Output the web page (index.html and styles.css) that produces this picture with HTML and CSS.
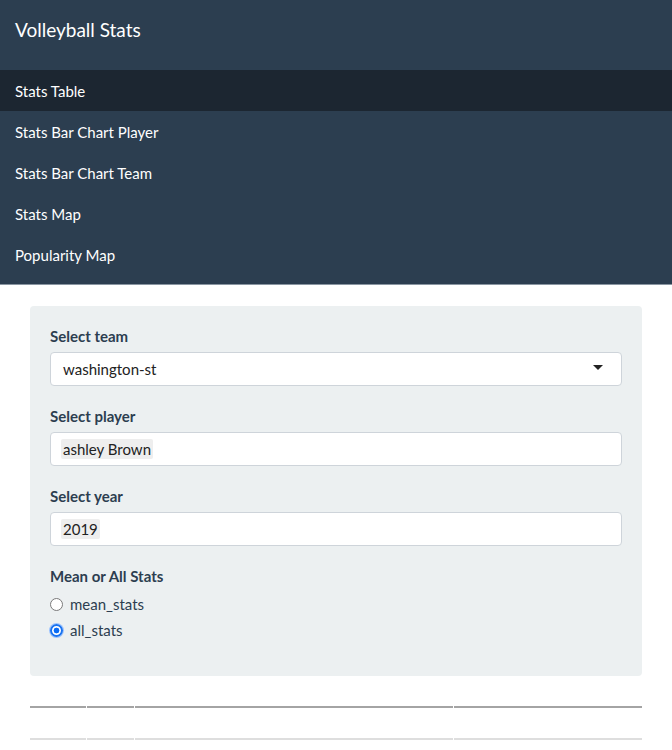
FILE: index.html
```html
<!DOCTYPE html>
<html>
<head>
<meta charset="utf-8">
<link rel="stylesheet" href="styles.css">
</head>
<body>
<nav class="navbar">
  <div class="brand">Volleyball Stats</div>
  <ul class="nav">
    <li class="active">Stats Table</li>
    <li>Stats Bar Chart Player</li>
    <li>Stats Bar Chart Team</li>
    <li>Stats Map</li>
    <li>Popularity Map</li>
  </ul>
</nav>
<main class="content">
  <div class="well">
    <div class="group">
      <label class="lbl">Select team</label>
      <div class="input select">
        <span>washington-st</span>
        <span class="caret"></span>
      </div>
    </div>
    <div class="group">
      <label class="lbl">Select player</label>
      <div class="input"><span class="chip">ashley Brown</span></div>
    </div>
    <div class="group">
      <label class="lbl">Select year</label>
      <div class="input"><span class="chip">2019</span></div>
    </div>
    <div class="group radios">
      <label class="lbl">Mean or All Stats</label>
      <label class="radio"><span class="dot"></span>mean_stats</label>
      <label class="radio"><span class="dot on"></span>all_stats</label>
    </div>
  </div>
  <div class="tblwrap">
    <table class="tbl">
      <thead>
        <tr><th class="c1"></th><th class="c2"></th><th class="c3"></th><th class="c4"></th></tr>
      </thead>
      <tbody>
        <tr><td>1</td><td>2019</td><td>ashley Brown</td><td>washington-st</td></tr>
      </tbody>
    </table>
  </div>
</main>
</body>
</html>
```
FILE: styles.css
```css
html, body {
  margin: 0;
  padding: 0;
  background: #fff;
  font-family: Lato, "Open Sans", sans-serif;
  color: #2c3e50;
}
.navbar {
  background: #2c3e50;
  padding-bottom: 9px;
  border-bottom: 1px solid #8a96a2;
}
.brand {
  height: 70px;
  box-sizing: border-box;
  padding: 18px 15px 0;
  font-size: 19px;
  line-height: 24px;
  color: #fff;
}
.nav {
  list-style: none;
  margin: 0;
  padding: 0;
}
.nav li {
  height: 40px;
  padding: 1px 15px 0;
  line-height: 41px;
  font-size: 15px;
  color: #fff;
}
.nav li.active {
  background: #1c2631;
}
.content {
  padding: 21px 30px 0;
}
.well {
  background: #ecf0f1;
  border-radius: 4px;
  padding: 20px 20px 33px;
}
.group {
  margin-bottom: 20px;
}
.group.radios { margin-bottom: 0; }
.lbl {
  display: block;
  font-weight: bold;
  font-size: 15px;
  line-height: 20px;
  margin-bottom: 6px;
}
.input {
  height: 34px;
  box-sizing: border-box;
  background: #fff;
  border: 1px solid #ced4da;
  border-radius: 4px;
  display: flex;
  align-items: center;
  padding: 0 12px;
  font-size: 15px;
  color: #222;
}
.input .chip {
  background: #eeeeee;
  border-radius: 2px;
  padding: 1px 2px;
  margin-left: -2px;
}
.select { justify-content: space-between; }
.caret {
  width: 0;
  height: 0;
  border-left: 5px solid transparent;
  border-right: 5px solid transparent;
  border-top: 5px solid #222;
  margin-right: 6px;
  margin-top: -3px;
}
.radios .lbl { margin-bottom: 5px; }
.radio {
  display: flex;
  align-items: center;
  font-size: 15px;
  height: 26px;
  color: #2c3e50;
}
.dot {
  width: 13px;
  height: 13px;
  border: 1px solid #7a7a7a;
  border-radius: 50%;
  background: #fff;
  margin-right: 7px;
  box-sizing: border-box;
}
.dot.on {
  border: 2px solid #1a73f0;
  background: radial-gradient(circle, #0a6cf5 0 2.6px, #fff 3.2px);
  box-shadow: 0 0 0 1px #9cc3ff;
}
.tblwrap {
  margin: 30px -1px 0;
}
.tbl {
  width: 100%;
  table-layout: fixed;
  border-collapse: separate;
  border-spacing: 1px 0;
  font-size: 13px;
}
.tbl th {
  border-top: 2px solid #a4a4a4;
  border-bottom: 2px solid #dedede;
  height: 30px;
  padding: 0;
}
.tbl td {
  color: #333;
  text-align: left;
  padding: 8px 5px;
  line-height: 18px;
  white-space: nowrap;
  overflow: hidden;
}
.c1 { width: 56px; }
.c2 { width: 47px; }
.c3 { width: 318px; }
```
